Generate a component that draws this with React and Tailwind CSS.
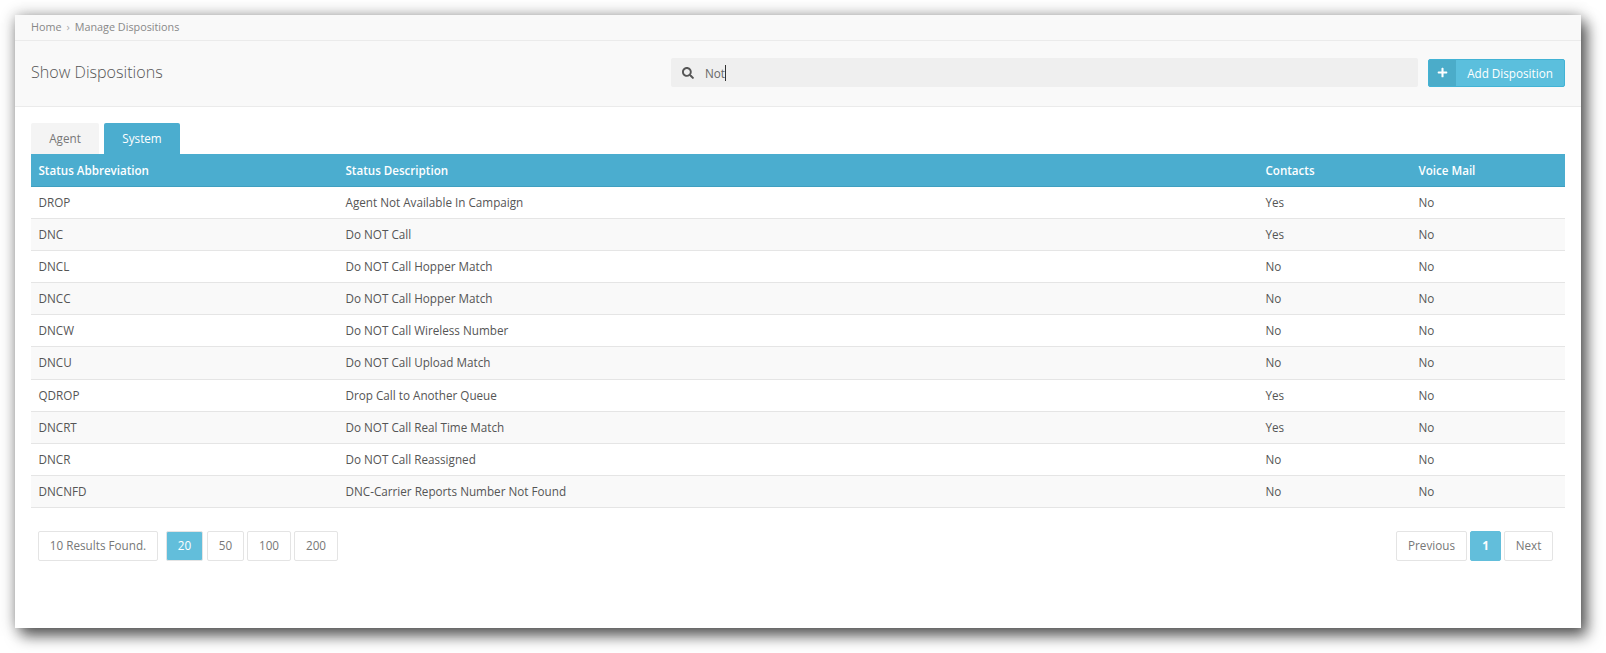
import { FaSearch, FaPlus } from 'react-icons/fa';

const rows = [
  ['DROP', 'Agent Not Available In Campaign', 'Yes', 'No'],
  ['DNC', 'Do NOT Call', 'Yes', 'No'],
  ['DNCL', 'Do NOT Call Hopper Match', 'No', 'No'],
  ['DNCC', 'Do NOT Call Hopper Match', 'No', 'No'],
  ['DNCW', 'Do NOT Call Wireless Number', 'No', 'No'],
  ['DNCU', 'Do NOT Call Upload Match', 'No', 'No'],
  ['QDROP', 'Drop Call to Another Queue', 'Yes', 'No'],
  ['DNCRT', 'Do NOT Call Real Time Match', 'Yes', 'No'],
  ['DNCR', 'Do NOT Call Reassigned', 'No', 'No'],
  ['DNCNFD', 'DNC-Carrier Reports Number Not Found', 'No', 'No'],
];

const cols = 'grid grid-cols-[307px_920px_153px_1fr] items-center pl-[7.5px]';

function PageBox({ children, active, className = '' }) {
  return (
    <div className={`h-[30px] flex items-center justify-center border rounded-[2px] ${active ? 'bg-[#62bedb] text-white border-[#e4e4e4]' : 'bg-white text-[#777] border-[#e4e4e4]'} ${className}`}>
      {children}
    </div>
  );
}

export default function App() {
  return (
    <div className="w-full h-[653px] bg-white pt-[15px] pl-[15px] pr-[25px] pb-[25px] overflow-hidden font-['Open_Sans',sans-serif] text-[11.7px] text-[#555]">
      <div className="h-[613px] bg-white shadow-[0_0_14px_rgba(0,0,0,0.3),6px_8px_14px_rgba(0,0,0,0.6)]">
        <div className="h-[26px] bg-[#f9f9f9] border-b border-[#ebebeb] flex items-center pl-4 text-[10.8px] text-[#888]">
          <span>Home</span>
          <span className="mx-[5px] text-[#aaa]">›</span>
          <span>Manage Dispositions</span>
        </div>
        <div className="h-[66px] bg-[#f9f9f9] border-b border-[#ebebeb] flex items-center pl-4 pr-4">
          <h1 className="w-[640px] text-[16.1px] font-light text-[#555] pb-[2px]">Show Dispositions</h1>
          <div className="h-[29px] w-[747px] bg-[#efefef] rounded-[2px] flex items-center pl-[11px] text-[#666] -mt-[2px]">
            <FaSearch className="text-[#555] text-[12px]" />
            <span className="ml-[11px] text-[#666] pt-[2px]">Not</span>
            <span className="w-px h-4 bg-[#333]" />
          </div>
          <button className="ml-[10px] h-[28px] w-[137px] flex rounded-[2px] border border-[#42b3d5] bg-[#5bbfdd] text-white overflow-hidden -mt-[2px]">
            <span className="w-[27px] h-full bg-[#4bacc9] flex items-center justify-center">
              <FaPlus className="text-[11px] -ml-px" />
            </span>
            <span className="flex-1 text-center self-center pt-[2px]">Add Disposition</span>
          </button>
        </div>
        <div className="px-4 pt-[16px]">
          <div className="flex gap-[5px] h-[31px]">
            <div className="w-[68px] bg-[#f4f4f4] rounded-t-[2px] flex items-center justify-center text-[#777] pt-px">Agent</div>
            <div className="w-[76px] bg-[#4badcf] rounded-t-[2px] flex items-center justify-center text-white pt-px">System</div>
          </div>
          <div className={`${cols} h-[33px] bg-[#4badcf] border-b border-[#3f9fc0] text-white font-semibold text-[11.6px] pt-[2px]`}>
            <div>Status Abbreviation</div>
            <div>Status Description</div>
            <div>Contacts</div>
            <div>Voice Mail</div>
          </div>
          {rows.map((row, i) => (
            <div key={row[0]} className={`${cols} h-[32.1px] pt-[0.5px] border-b border-[#e5e5e5] ${i % 2 === 1 ? 'bg-[#f9f9f9]' : 'bg-white'}`}>
              {row.map((cell, j) => <div key={j}>{cell}</div>)}
            </div>
          ))}
          <div className="flex justify-between pl-[7px] pr-3 mt-[23px]">
            <div className="flex">
              <PageBox className="w-[120px] mr-2">10 Results Found.</PageBox>
              <PageBox active className="w-[37px] mr-1">20</PageBox>
              <PageBox className="w-[37px] mr-[3px]">50</PageBox>
              <PageBox className="w-[44px] mr-[3px]">100</PageBox>
              <PageBox className="w-[44px]">200</PageBox>
            </div>
            <div className="flex gap-[3px]">
              <PageBox className="w-[71px]">Previous</PageBox>
              <PageBox active className="w-[31px] font-bold !border-[#62bedb]">1</PageBox>
              <PageBox className="w-[49px]">Next</PageBox>
            </div>
          </div>
        </div>
      </div>
    </div>
  );
}
